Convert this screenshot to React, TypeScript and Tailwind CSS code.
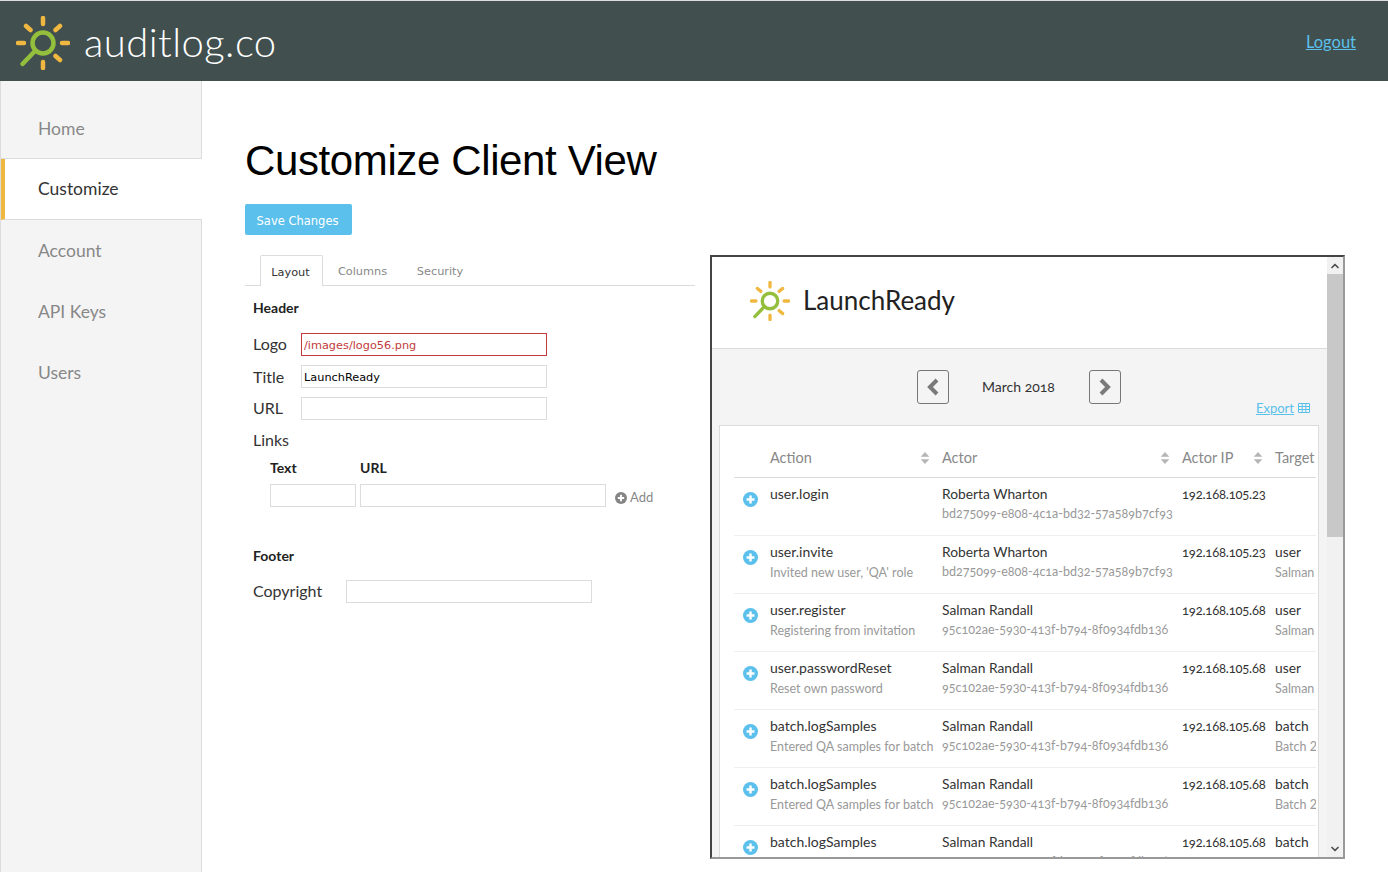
import React from 'react';
import { ChevronUp, ChevronDown } from 'lucide-react';

const RALEWAY = "font-['Lato',sans-serif]";

const NAV = ['Home', 'Customize', 'Account', 'API Keys', 'Users'];

const ROWS = [
  { action: 'user.login', note: '', actor: 'Roberta Wharton', id: 'bd275099-e808-4c1a-bd32-57a589b7cf93', ip: '192.168.105.23', target: '', sub: '' },
  { action: 'user.invite', note: "Invited new user, 'QA' role", actor: 'Roberta Wharton', id: 'bd275099-e808-4c1a-bd32-57a589b7cf93', ip: '192.168.105.23', target: 'user', sub: 'Salman Randall' },
  { action: 'user.register', note: 'Registering from invitation', actor: 'Salman Randall', id: '95c102ae-5930-413f-b794-8f0934fdb136', ip: '192.168.105.68', target: 'user', sub: 'Salman Randall' },
  { action: 'user.passwordReset', note: 'Reset own password', actor: 'Salman Randall', id: '95c102ae-5930-413f-b794-8f0934fdb136', ip: '192.168.105.68', target: 'user', sub: 'Salman Randall' },
  { action: 'batch.logSamples', note: 'Entered QA samples for batch', actor: 'Salman Randall', id: '95c102ae-5930-413f-b794-8f0934fdb136', ip: '192.168.105.68', target: 'batch', sub: 'Batch 2018' },
  { action: 'batch.logSamples', note: 'Entered QA samples for batch', actor: 'Salman Randall', id: '95c102ae-5930-413f-b794-8f0934fdb136', ip: '192.168.105.68', target: 'batch', sub: 'Batch 2018' },
  { action: 'batch.logSamples', note: 'Entered QA samples for batch', actor: 'Salman Randall', id: '95c102ae-5930-413f-b794-8f0934fdb136', ip: '192.168.105.68', target: 'batch', sub: 'Batch 2018' },
];

const Logo = ({ className }: { className: string }) => (
  <svg viewBox="0 0 54 54" className={className} fill="none" strokeLinecap="round">
    <g stroke="#f0b840" strokeWidth="4.500">
      <path d="M27 2v6M27 46v6M2 27h6M46 27h6M10 10l4.500 4M44 10l-4.500 4M44 44l-4.500-4" />
    </g>
    <g stroke="#94bf3d">
      <circle cx="27" cy="27" r="10.500" strokeWidth="4.500" />
      <path d="M19 35L6.500 48" strokeWidth="4.500" />
    </g>
  </svg>
);

const SortIcon = () => (
  <svg viewBox="0 0 10 14" className="w-[10px] h-[12px] fill-[#b5b5b5]">
    <path d="M5 0l5 5.500H0zM5 14L0 8.500h10z" />
  </svg>
);

const PlusCircle = ({ className, fill }: { className: string; fill: string }) => (
  <svg viewBox="0 0 16 16" className={className}>
    <circle cx="8" cy="8" r="8" fill={fill} />
    <path d="M8 3.800v8.400M3.800 8h8.400" stroke="#fff" strokeWidth="2.600" />
  </svg>
);

const PagerChevron = ({ d }: { d: string }) => (
  <svg viewBox="0 0 14 18" className="w-[14px] h-[18px]" fill="none" stroke="#7a7a7a" strokeWidth="4">
    <path d={d} />
  </svg>
);

const TextBox = ({ className, value }: { className: string; value?: string }) => (
  <input
    readOnly
    value={value ?? ''}
    className={`h-[23px] border border-[#dcdcdc] bg-white px-[2px] pt-[2px] text-[11.300px] text-black font-['DejaVu_Sans',sans-serif] outline-none ${className}`}
  />
);

const Sidebar = () => (
  <nav className={`w-[202px] shrink-0 border-l border-r border-[#dcdcdc] bg-[#f4f4f4] ${RALEWAY}`}>
    {NAV.map((name, i) => (
      <div
        key={name}
        className={
          i === 1
            ? 'h-[61px] flex items-center pl-[33px] border-l-[4px] border-l-[#f0b840] border-b border-[#dcdcdc] bg-white -mr-px text-[17.500px] text-[#333]'
            : i === 0
              ? 'h-[78px] flex items-center pt-[19px] pl-[37px] border-b border-[#dcdcdc] text-[17.500px] text-[#888]'
              : 'h-[61px] flex items-center pt-[2px] pl-[37px] text-[17.500px] text-[#888]'
        }
      >
        {name}
      </div>
    ))}
  </nav>
);

const Form = () => (
  <div className="w-[450px] shrink-0">
    <div className="flex h-[31px] border-b border-[#dcdcdc] pl-[15px] text-[11.300px] font-['DejaVu_Sans',sans-serif]">
      <div className="h-[31px] w-[63px] pt-[4px] pr-[2px] flex items-center justify-center border border-b-0 border-[#dcdcdc] bg-white rounded-t-[2px] text-[#333]">Layout</div>
      <div className="w-[79px] pt-[5px] flex items-center justify-center text-[#888]">Columns</div>
      <div className="w-[76px] pt-[5px] flex items-center justify-center text-[#888]">Security</div>
    </div>
    <div className="pl-[8px] pt-[13px] font-['Lato',sans-serif]">
      <h4 className="text-[14px] leading-[17px] font-bold text-[#222]">Header</h4>
      <div className="mt-[17px] flex flex-col gap-[9px] text-[16px] text-[#333]">
        <div className="flex items-center h-[23px]">
          <span className="w-[48px] -mt-[2px]">Logo</span>
          <TextBox className="w-[246px] !border-[#c23b3b] !text-[#c23b3b]" value="/images/logo56.png" />
        </div>
        <div className="flex items-center h-[23px]">
          <span className="w-[48px]">Title</span>
          <TextBox className="w-[246px]" value="LaunchReady" />
        </div>
        <div className="flex items-center h-[23px]">
          <span className="w-[48px] -mt-[2px]">URL</span>
          <TextBox className="w-[246px]" />
        </div>
        <div className="flex items-center h-[23px] -mt-[1px]">Links</div>
      </div>
      <div className="mt-[8px] ml-[17px]">
        <div className="flex text-[14px] font-bold leading-[17px] text-[#222]">
          <span className="w-[90px]">Text</span>
          <span>URL</span>
        </div>
        <div className="mt-[7px] flex items-center gap-[4px]">
          <TextBox className="w-[86px]" />
          <TextBox className="w-[246px]" />
          <span className="ml-[5px] mt-[5px] flex items-center gap-[3px] text-[13px] text-[#888]">
            <PlusCircle className="w-[12px] h-[12px]" fill="#858585" />
            Add
          </span>
        </div>
      </div>
      <h4 className="mt-[39px] text-[14px] leading-[17px] font-bold text-[#222]">Footer</h4>
      <div className="mt-[16px] flex items-center h-[23px] text-[16px] text-[#333]">
        <span className="w-[93px]">Copyright</span>
        <TextBox className="w-[246px]" />
      </div>
    </div>
  </div>
);

const COLS = 'grid grid-cols-[36px_172px_240px_93px_1fr]';

const Preview = () => (
  <div className={`ml-[15px] h-[604px] w-[635px] flex overflow-hidden border-2 border-t-[#444] border-l-[#444] border-r-[#999] border-b-[#999] ${RALEWAY}`}>
    <div className="w-[615px] shrink-0 bg-[#f4f4f4] overflow-hidden">
      <div className="h-[92px] bg-white border-b border-[#dcdcdc] flex items-center pl-[38px] pb-[4px]">
        <Logo className="w-[40px] h-[40px]" />
        <span className="ml-[13px] text-[26px] text-[#222]">LaunchReady</span>
      </div>
      <div className="relative h-[76px] flex items-center justify-center pb-[1px] pr-[2px]">
        <button className="w-[32px] h-[34px] flex items-center justify-center border border-[#777] rounded-[3px]">
          <PagerChevron d="M11 2L4 9l7 7" />
        </button>
        <span className="w-[140px] text-center text-[14px] oldstyle-nums text-[#333]">March 2018</span>
        <button className="w-[32px] h-[34px] flex items-center justify-center border border-[#777] rounded-[3px]">
          <PagerChevron d="M3 2l7 7-7 7" />
        </button>
        <span className="absolute right-[17px] bottom-[7px] flex items-center gap-[4px] text-[13px] text-[#5bc0eb]">
          <span className="underline">Export </span>
          <svg viewBox="0 0 12 10" className="w-[12px] h-[10px]" fill="none" stroke="#5bc0eb">
            <path d="M.5.5h11v9H.5zM.5 3.500h11M.5 6.500h11M4.200.5v9M7.800.5v9" />
          </svg>
        </span>
      </div>
      <div className="ml-[7px] w-[600px] h-[434px] overflow-hidden border border-[#dcdcdc] bg-white pl-[14px] pr-[2px]">
        <div className={`${COLS} h-[52px] items-center pt-[12px] border-b border-[#dcdcdc] text-[14.500px] text-[#888]`}>
          <span />
          <span className="flex items-center justify-between pr-[12px]">Action <SortIcon /></span>
          <span className="flex items-center justify-between pr-[12px]">Actor <SortIcon /></span>
          <span className="flex items-center justify-between pr-[12px]">Actor IP <SortIcon /></span>
          <span>Target</span>
        </div>
        {ROWS.map((r, i) => (
          <div key={i} className={`${COLS} h-[58px] pt-[6px] border-b border-[#eee] text-[13.800px] leading-[20px] whitespace-nowrap`}>
            <div className="pl-[9px] pt-[8px]"><PlusCircle className="w-[15px] h-[15px]" fill="#5bc0eb" /></div>
            <div>
              <div className="text-[14px] text-[#333]">{r.action}</div>
              <div className="text-[12.500px] mt-[1px] text-[#999]">{r.note}</div>
            </div>
            <div>
              <div className="text-[#333]">{r.actor}</div>
              <div className="text-[12.500px] oldstyle-nums text-[#999]">{r.id}</div>
            </div>
            <div className="text-[13px] tracking-[-0.2px] oldstyle-nums text-[#333]">{r.ip}</div>
            <div className="overflow-hidden">
              <div className="text-[#333]">{r.target}</div>
              <div className="text-[12.500px] mt-[1px] text-[#999]">{r.sub}</div>
            </div>
          </div>
        ))}
      </div>
    </div>
    <div className="flex-1 flex flex-col bg-[#f1f1f1]">
      <div className="h-[17px] flex items-center justify-center"><ChevronUp className="w-[12px] h-[12px] text-[#505050]" strokeWidth={3.500} /></div>
      <div className="h-[263px] bg-[#c8c8c8]" />
      <div className="flex-1" />
      <div className="h-[17px] flex items-center justify-center"><ChevronDown className="w-[12px] h-[12px] text-[#505050]" strokeWidth={3.500} /></div>
    </div>
  </div>
);

export default function App() {
  return (
    <div className="h-[872px] overflow-hidden bg-white flex flex-col">
      <header className="h-[81px] shrink-0 border-t border-[#ddd] bg-[#414f4f] flex items-center justify-between pt-[3px] pl-[16px] pr-[32px]">
        <div className="flex items-center">
          <Logo className="w-[54px] h-[54px]" />
          <span className="ml-[14px] -mt-[2px] text-[40px] tracking-[0.45px] text-white font-['Lato',sans-serif] font-light">auditlog.co</span>
        </div>
        <a className="-mt-[1px] text-[16.500px] text-[#5bc0eb] underline font-['Lato',sans-serif]">Logout</a>
      </header>
      <div className="flex flex-1">
        <Sidebar />
        <main className="pl-[43px] flex-1">
          <h1 className="mt-[55px] text-[42px] leading-[50px] tracking-[-0.38px] text-black font-['Liberation_Sans',sans-serif]">Customize Client View</h1>
          <button className="mt-[18px] h-[31px] w-[107px] pt-[4px] pr-[2px] bg-[#5bc0eb] rounded-[2px] text-[11.500px] text-white font-['DejaVu_Sans',sans-serif]">Save Changes</button>
          <div className="mt-[20px] flex">
            <Form />
            <Preview />
          </div>
        </main>
      </div>
    </div>
  );
}
